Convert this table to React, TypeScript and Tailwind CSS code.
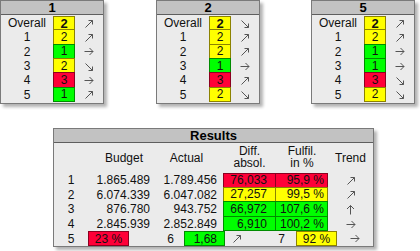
import type { ReactNode } from 'react';

type Dir = 'ne' | 'e' | 'se' | 'n';
type Tone = 'y' | 'g' | 'r';

const arrowPaths: Record<Dir, string> = {
  ne: 'M2.5 9.5 L9.5 2.5 M5.5 2.5 H9.5 V6.5',
  e: 'M1.5 5.5 H10 M6.5 2 L10 5.5 L6.5 9',
  se: 'M2.5 2.5 L9.5 9.5 M9.5 5.5 V9.5 H5.5',
  n: 'M5.5 10.5 V1.5 M2 5 L5.5 1.5 L9 5',
};

function Arrow({ dir }: { dir: Dir }) {
  return (
    <svg width="12" height="11" viewBox="0 0 12 11" className="block">
      <path d={arrowPaths[dir]} fill="none" stroke="#555555" strokeWidth="1" />
    </svg>
  );
}

const toneClass: Record<Tone, string> = {
  y: 'bg-[#ffff00] border-[#8c8200]',
  g: 'bg-[#00ff00] border-[#008c00]',
  r: 'bg-[#ff0038] border-[#8c0020]',
};

interface ScoreRow {
  label: string;
  value: number;
  tone: Tone;
  dir: Dir;
}

const panels: { title: string; rows: ScoreRow[] }[] = [
  {
    title: '1',
    rows: [
      { label: 'Overall', value: 2, tone: 'y', dir: 'ne' },
      { label: '1', value: 2, tone: 'y', dir: 'ne' },
      { label: '2', value: 1, tone: 'g', dir: 'e' },
      { label: '3', value: 2, tone: 'y', dir: 'se' },
      { label: '4', value: 3, tone: 'r', dir: 'e' },
      { label: '5', value: 1, tone: 'g', dir: 'ne' },
    ],
  },
  {
    title: '2',
    rows: [
      { label: 'Overall', value: 2, tone: 'y', dir: 'se' },
      { label: '1', value: 2, tone: 'y', dir: 'ne' },
      { label: '2', value: 2, tone: 'y', dir: 'ne' },
      { label: '3', value: 1, tone: 'g', dir: 'e' },
      { label: '4', value: 3, tone: 'r', dir: 'ne' },
      { label: '5', value: 2, tone: 'y', dir: 'se' },
    ],
  },
  {
    title: '5',
    rows: [
      { label: 'Overall', value: 2, tone: 'y', dir: 'ne' },
      { label: '1', value: 2, tone: 'y', dir: 'ne' },
      { label: '2', value: 1, tone: 'g', dir: 'e' },
      { label: '3', value: 1, tone: 'g', dir: 'e' },
      { label: '4', value: 3, tone: 'r', dir: 'se' },
      { label: '5', value: 2, tone: 'y', dir: 'se' },
    ],
  },
];

const results = [
  { n: '1', budget: '1.865.489', actual: '1.789.456', diff: '76,033', ful: '95,9 %', tone: 'r' as Tone, dir: 'ne' as Dir },
  { n: '2', budget: '6.074.339', actual: '6.047.082', diff: '27,257', ful: '99,5 %', tone: 'y' as Tone, dir: 'ne' as Dir },
  { n: '3', budget: '876.780', actual: '943.752', diff: '66,972', ful: '107,6 %', tone: 'g' as Tone, dir: 'n' as Dir },
  { n: '4', budget: '2.845.939', actual: '2.852.849', diff: '6,910', ful: '100,2 %', tone: 'g' as Tone, dir: 'e' as Dir },
];

function Panel({ title, width, children }: { title: string; width: string; children: ReactNode }) {
  return (
    <div className={`${width} border border-[#7a7a7a] bg-[#ebebeb] shadow-[3px_3px_3px_rgba(0,0,0,0.3)]`}>
      <div className="h-[14px] bg-[#c2c2c2] border-b border-[#5e5e5e] flex items-center justify-center font-bold text-[13px] leading-none text-black">
        {title}
      </div>
      {children}
    </div>
  );
}

export default function App() {
  return (
    <div className="w-[420px] h-[251px] bg-white text-[12px] leading-none text-[#111] font-['Liberation_Sans',Arial,sans-serif]">
      <div className="flex">
        {panels.map((p, i) => (
          <div key={p.title} className={i === 0 ? '' : i === 1 ? 'ml-[52px]' : 'ml-[51px]'}>
            <Panel title={p.title} width="w-[104px]">
              <div className="pt-[1px] pb-[1px]">
                {p.rows.map((r, j) => (
                  <div key={j} className="flex h-[14.33px] items-stretch">
                    <div className="w-[52px] flex items-center justify-center">{r.label}</div>
                    <div
                      className={`w-[22px] border flex items-center justify-center ${toneClass[r.tone]} ${j === 0 ? 'font-bold text-[13px]' : ''} ${j > 0 ? '-mt-px' : ''}`}
                    >
                      {r.value}
                    </div>
                    <div className="flex-1 flex items-center justify-center">
                      <Arrow dir={r.dir} />
                    </div>
                  </div>
                ))}
              </div>
            </Panel>
          </div>
        ))}
      </div>

      <div className="mt-[24px] ml-[53px]">
        <Panel title="Results" width="w-[321px]">
          <div className="grid grid-cols-[34px_64px_67px_4px_53px_52px_45px] h-[30px] items-center text-center">
            <div />
            <div className="pl-[8px]">Budget</div>
            <div className="pl-[2px]">Actual</div>
            <div />
            <div className="flex flex-col items-center gap-[1px]">
              <span className="leading-[11px]">Diff.</span>
              <span className="leading-[11px]">absol.</span>
            </div>
            <div className="flex flex-col items-center gap-[1px]">
              <span className="leading-[11px]">Fulfil.</span>
              <span className="leading-[11px]">in %</span>
            </div>
            <div>Trend</div>
          </div>
          {results.map((r) => (
            <div key={r.n} className="grid grid-cols-[34px_64px_67px_4px_53px_52px_45px] h-[14.6px] items-stretch">
              <div className="flex items-center justify-center">{r.n}</div>
              <div className="flex items-center justify-end pr-[2px]">{r.budget}</div>
              <div className="flex items-center justify-end pr-[2px]">{r.actual}</div>
              <div />
              <div className={`border flex items-center justify-end pr-[8px] ${toneClass[r.tone]} ${r.n !== '1' ? '-mt-px' : ''}`}>{r.diff}</div>
              <div className={`border -ml-px flex items-center justify-end pr-[3px] ${toneClass[r.tone]} ${r.n !== '1' ? '-mt-px' : ''}`}>{r.ful}</div>
              <div className="flex items-center justify-center">
                <Arrow dir={r.dir} />
              </div>
            </div>
          ))}
          <div className="flex h-[15px] items-stretch">
            <div className="w-[34px] flex items-center justify-center">5</div>
            <div className={`w-[41px] border flex items-center justify-center ${toneClass.r}`}>23 %</div>
            <div className="w-[55px] flex items-center justify-end pr-[10px]">6</div>
            <div className={`w-[41px] border flex items-center justify-end pr-[7px] ${toneClass.g}`}>1,68</div>
            <div className="w-[24px] flex items-center justify-center">
              <Arrow dir="ne" />
            </div>
            <div className="w-[47px] flex items-center justify-end pr-[11px]">7</div>
            <div className={`w-[41px] border flex items-center justify-center ${toneClass.y}`}>92 %</div>
            <div className="flex-1 flex items-center justify-center">
              <Arrow dir="e" />
            </div>
          </div>
        </Panel>
      </div>
    </div>
  );
}
